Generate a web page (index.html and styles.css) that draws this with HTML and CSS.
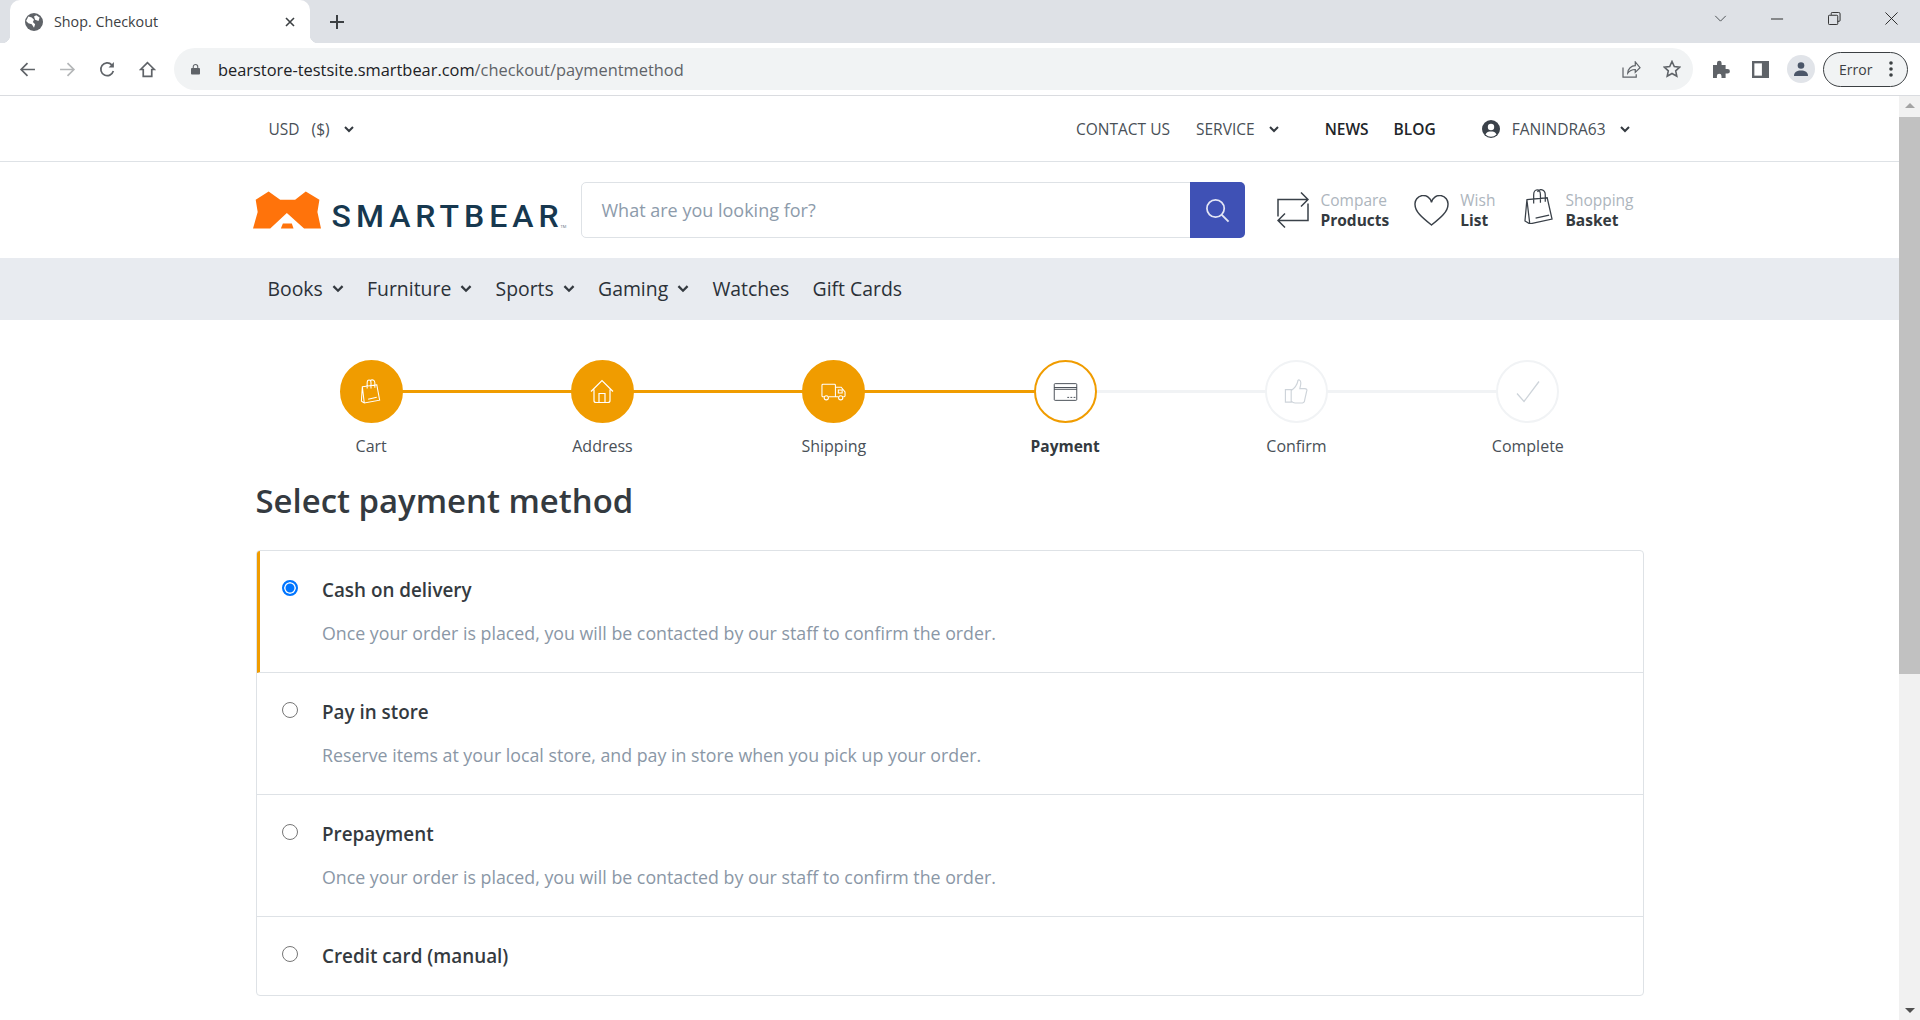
FILE: index.html
```html
<!DOCTYPE html>
<html lang="en">
<head>
  <meta charset="UTF-8" />
  <title>Shop. Checkout</title>
  <link rel="stylesheet" href="styles.css">
</head>
<body>

  <!-- Browser tab strip -->
  <div class="tabstrip">
    <div class="tab">
      <svg class="favicon" viewBox="0 0 16 16"><circle cx="8" cy="8" r="8" fill="#5f6368"/><path d="M3 3l3 1 2 2-1 2 2 2-1 3-2-3-3-1-2-2zM10 2l3 2-1 3-3-1-1-3z" fill="#fff"/></svg>
      <span class="tab-title">Shop. Checkout</span>
      <svg class="tab-close" viewBox="0 0 10 10"><path d="M1 1l8 8M9 1l-8 8" stroke="#3c4043" stroke-width="1.6"/></svg>
    </div>
    <svg class="tab-new" viewBox="0 0 14 14"><path d="M7 0v14M0 7h14" stroke="#3c4043" stroke-width="2"/></svg>
    <div class="window-btns">
      <svg viewBox="0 0 14 8" class="win-list"><path d="M1 1l6 6 6-6" fill="none" stroke="#3c4043"/></svg>
      <svg viewBox="0 0 14 2" class="win-min"><path d="M0 1h13" stroke="#222"/></svg>
      <svg viewBox="0 0 14 14" class="win-max"><path d="M3.5 3V1.500a1 1 0 0 1 1-1h7a1.500 1.500 0 0 1 1.500 1.500v7a1 1 0 0 1-1 1h-1.500M1.500 3.500h8a1 1 0 0 1 1 1v8a1 1 0 0 1-1 1h-8a1 1 0 0 1-1-1v-8a1 1 0 0 1 1-1z" fill="none" stroke="#222"/></svg>
      <svg viewBox="0 0 14 14" class="win-close"><path d="M.5.500l13 13M13.500.500l-13 13" stroke="#222"/></svg>
    </div>
  </div>

  <!-- Browser toolbar -->
  <div class="toolbar">
    <svg class="tool-icon back" viewBox="0 0 16 16"><path d="M15 8H2M8 2L2 8l6 6" fill="none" stroke="#5f6368" stroke-width="1.600"/></svg>
    <svg class="tool-icon fwd" viewBox="0 0 16 16"><path d="M1 8h13M8 2l6 6-6 6" fill="none" stroke="#b4b6b8" stroke-width="1.600"/></svg>
    <svg class="tool-icon reload" viewBox="0 0 16 16"><path d="M13.500 9.500A6 6 0 1 1 12 3.600" fill="none" stroke="#5f6368" stroke-width="1.600"/><path d="M14 1v5H9z" fill="#5f6368"/></svg>
    <svg class="tool-icon home" viewBox="0 0 16 16"><path d="M8 1.500L1.500 8H4v6.500h8V8h2.500z" fill="none" stroke="#5f6368" stroke-width="1.600"/></svg>
    <div class="omnibox">
      <svg class="lock" viewBox="0 0 10 12"><path d="M1 5h8a1 1 0 0 1 1 1v5a1 1 0 0 1-1 1H1a1 1 0 0 1-1-1V6a1 1 0 0 1 1-1z" fill="#5f6368"/><path d="M2.500 5V3.500a2.500 2.500 0 0 1 5 0V5" fill="none" stroke="#5f6368" stroke-width="1.200"/></svg>
      <span class="url"><span class="url-host">bearstore-testsite.smartbear.com</span>/checkout/paymentmethod</span>
      <svg class="omni-share" viewBox="0 0 20 18"><path d="M1 7v10h14v-3M6 13c0-5 4-8 8-8V1l5 6-5 5V9c-4 0-6 1-8 4z" fill="none" stroke="#5f6368" stroke-width="1.300"/></svg>
      <svg class="omni-star" viewBox="0 0 18 18"><path d="M9 1.500l2.300 5 5.400.6-4 3.700 1.100 5.400L9 13.500l-4.800 2.700 1.100-5.400-4-3.700 5.400-.6z" fill="none" stroke="#5f6368" stroke-width="1.600"/></svg>
    </div>
    <svg class="ext-icon" viewBox="0 0 18 18"><path d="M1 5h4V3a2.300 2.300 0 0 1 4.600 0v2h4v4h2a2.300 2.300 0 0 1 0 4.600h-2V18H9.500v-2a2.300 2.300 0 0 0-4.600 0v2H1z" fill="#5f6368"/></svg>
    <svg class="side-icon" viewBox="0 0 18 18"><path d="M0 0h18v18H0z" fill="#5f6368"/><path d="M2.500 2.500h8v13h-8z" fill="#fff"/></svg>
    <div class="avatar"><svg viewBox="0 0 16 16"><circle cx="8" cy="4.500" r="3.300" fill="#4a5568"/><path d="M1 15c0-4 3-5.500 7-5.500s7 1.500 7 5.500z" fill="#4a5568"/></svg></div>
    <div class="error-pill">
      <span>Error</span>
      <svg viewBox="0 0 4 16"><circle cx="2" cy="2" r="1.800" fill="#3c4043"/><circle cx="2" cy="8" r="1.800" fill="#3c4043"/><circle cx="2" cy="14" r="1.800" fill="#3c4043"/></svg>
    </div>
  </div>

  <div class="viewport">
    <div class="page">

      <!-- Top menu -->
      <div class="topbar">
        <div class="container topbar-inner">
          <span class="top-link currency">USD &nbsp;($)<svg class="chev" viewBox="0 0 10 7"><path d="M1 1l4 4 4-4" /></svg></span>
          <span class="top-link contact">CONTACT US</span>
          <span class="top-link service">SERVICE<svg class="chev" viewBox="0 0 10 7"><path d="M1 1l4 4 4-4" /></svg></span>
          <span class="top-link strong news">NEWS</span>
          <span class="top-link strong blog">BLOG</span>
          <svg class="user-icon" viewBox="0 0 18 18"><circle cx="9" cy="9" r="9" fill="#3a4149"/><circle cx="9" cy="7" r="3.200" fill="#fff"/><path d="M3.500 14.500c1-2.500 3-3 5.500-3s4.500.5 5.500 3a8 8 0 0 1-11 0z" fill="#fff"/></svg>
          <span class="top-link user">FANINDRA63<svg class="chev" viewBox="0 0 10 7"><path d="M1 1l4 4 4-4" /></svg></span>
        </div>
      </div>

      <!-- Logo, search and tools -->
      <div class="header">
        <div class="container header-inner">
          <div class="logo">
            <svg class="bear" viewBox="0 0 68.300 37.300"><path d="M2.700 8.300L15.700 0l11.600 8.300h15L53 0l13.700 8.300-2 12.400 3.600 16.600h-17L34 21.700 17.300 37.300H0l4.700-16.600z" fill="#ff730b"/><path d="M28 37.300l2-5h9l1.700 5z" fill="#ff730b"/></svg>
            <span class="logo-text">SMARTBEAR</span><span class="logo-tm">TM</span>
          </div>
          <div class="search">
            <span class="search-input">What are you looking for?</span>
            <div class="search-btn"><svg viewBox="0 0 26 26"><circle cx="11" cy="11" r="9" fill="none" stroke="#e4e6f5" stroke-width="1.800"/><path d="M17.500 17.500l7 7" stroke="#e4e6f5" stroke-width="2"/></svg></div>
          </div>
          <div class="tool compare">
            <svg viewBox="0 0 32 36"><path d="M1 25V8h30M24 1l7 7-7 7M31 12v17H1M8 22l-7 7 7 7" fill="none" stroke="#3a4149" stroke-width="1.500" transform="translate(0 -.5)"/></svg>
            <div class="tool-text"><span>Compare</span><b>Products</b></div>
          </div>
          <div class="tool wish">
            <svg viewBox="0 0 36 32"><path d="M18 31C8 23 1 17 1 10a8.600 8.600 0 0 1 17-2.500A8.600 8.600 0 0 1 35 10c0 7-7 13-17 21z" fill="none" stroke="#3a4149" stroke-width="1.500"/></svg>
            <div class="tool-text"><span>Wish</span><b>List</b></div>
          </div>
          <div class="tool basket">
            <svg viewBox="0 0 30 36"><path d="M3 11l21-2 5 22-23 5-5-3zM1 33l2-22M6 36l-3-25M10 15V6c0-7 7-7 7 0v8M14 3c2-4 8-3 8 3v7M12 30l14-3" fill="none" stroke="#3a4149" stroke-width="1.300"/></svg>
            <div class="tool-text"><span>Shopping</span><b>Basket</b></div>
          </div>
        </div>
      </div>

      <!-- Main navigation -->
      <div class="nav">
        <div class="container nav-inner">
          <span class="nav-item">Books<svg class="chev" viewBox="0 0 10 7"><path d="M1 1l4 4 4-4" /></svg></span>
          <span class="nav-item">Furniture<svg class="chev" viewBox="0 0 10 7"><path d="M1 1l4 4 4-4" /></svg></span>
          <span class="nav-item">Sports<svg class="chev" viewBox="0 0 10 7"><path d="M1 1l4 4 4-4" /></svg></span>
          <span class="nav-item">Gaming<svg class="chev" viewBox="0 0 10 7"><path d="M1 1l4 4 4-4" /></svg></span>
          <span class="nav-item">Watches</span>
          <span class="nav-item">Gift Cards</span>
        </div>
      </div>

      <div class="container">
        <!-- Checkout steps -->
        <div class="steps">
          <div class="step done">
            <div class="step-circle"><svg viewBox="0 0 24 26"><path d="M3 8l15-2 3 16-16 3-3-2zM2 23L3 8M5 25L3 8M8 10V4c0-4 4-4 4 0v6M11 2c2-2 5-1 5 2v5M9 21l9-2" fill="none" stroke="#fff" stroke-width="1.100"/></svg></div>
            <div class="step-label">Cart</div>
          </div>
          <div class="step done">
            <div class="step-circle"><svg viewBox="0 0 24 24"><path d="M1 12L12 1l11 11M4 10v11a2 2 0 0 0 2 2h12a2 2 0 0 0 2-2V10M9 23v-9h6v9" fill="none" stroke="#fff" stroke-width="1.200"/></svg></div>
            <div class="step-label">Address</div>
          </div>
          <div class="step done">
            <div class="step-circle"><svg class="wide" viewBox="0 0 26 18"><path d="M3 14H2a1 1 0 0 1-1-1V2a1 1 0 0 1 1-1h12a1 1 0 0 1 1 1v12H8M15 4h6l4 5v4a1 1 0 0 1-1 1h-1M18 14h-3M18 7h4v3h-4z" fill="none" stroke="#fff" stroke-width="1.100"/><circle cx="5.500" cy="15" r="2.200" fill="none" stroke="#fff" stroke-width="1.100"/><circle cx="20.500" cy="15" r="2.200" fill="none" stroke="#fff" stroke-width="1.100"/></svg></div>
            <div class="step-label">Shipping</div>
          </div>
          <div class="step active">
            <div class="step-circle"><svg class="wide" viewBox="0 0 26 20"><path d="M1.500.700h23a1 1 0 0 1 1 1v16.600a1 1 0 0 1-1 1h-23a1 1 0 0 1-1-1V1.700a1 1 0 0 1 1-1zM.500 5h25M.500 7h25M15 16h2M18.500 16h2M22 16h2" fill="none" stroke="#3a4149" stroke-width="1"/></svg></div>
            <div class="step-label">Payment</div>
          </div>
          <div class="step todo">
            <div class="step-circle"><svg viewBox="0 0 24 26"><path d="M1 11h6v13H1zM7 12c3-2 6-5 7-10 0-2 3-1 3 2 0 3-1 5-1 6h5c2 0 3 1 2 3l-2 9c0 2-2 3-4 3H11c-2 0-3-1-4-2" fill="none" stroke="#ced4da" stroke-width="1.200"/></svg></div>
            <div class="step-label">Confirm</div>
          </div>
          <div class="step todo last">
            <div class="step-circle"><svg viewBox="0 0 24 24"><path d="M1 14l7 8L23 2" fill="none" stroke="#ced4da" stroke-width="1.300"/></svg></div>
            <div class="step-label">Complete</div>
          </div>
        </div>

        <h1 class="page-title">Select payment method</h1>

        <!-- Payment options -->
        <div class="methods">
          <div class="method selected">
            <span class="radio checked"></span>
            <div>
              <div class="method-name">Cash on delivery</div>
              <div class="method-desc">Once your order is placed, you will be contacted by our staff to confirm the order.</div>
            </div>
          </div>
          <div class="method">
            <span class="radio"></span>
            <div>
              <div class="method-name">Pay in store</div>
              <div class="method-desc">Reserve items at your local store, and pay in store when you pick up your order.</div>
            </div>
          </div>
          <div class="method">
            <span class="radio"></span>
            <div>
              <div class="method-name">Prepayment</div>
              <div class="method-desc">Once your order is placed, you will be contacted by our staff to confirm the order.</div>
            </div>
          </div>
          <div class="method short">
            <span class="radio"></span>
            <div>
              <div class="method-name">Credit card (manual)</div>
            </div>
          </div>
        </div>
      </div>
    </div>

    <!-- Scrollbar -->
    <div class="scrollbar">
      <svg class="sb-arrow" viewBox="0 0 10 5"><path d="M0 5l5-5 5 5z" fill="#a3a3a3"/></svg>
      <div class="sb-thumb"></div>
      <svg class="sb-arrow bottom" viewBox="0 0 10 5"><path d="M0 0l5 5 5-5z" fill="#505050"/></svg>
    </div>
  </div>

</body>
</html>
```

FILE: styles.css
```css
html, body {
  margin: 0;
  height: 1020px;
  overflow: hidden;
}

body {
  font-family: "Open Sans", "Noto Sans", sans-serif;
  color: #343a40;
  background: #fff;
  display: flex;
  flex-direction: column;
}

svg {
  display: block;
  flex: none;
}

/* browser chrome */
.tabstrip {
  height: 43px;
  background: #dee1e6;
  display: flex;
  align-items: flex-end;
  flex: none;
}

.tab {
  position: relative;
  width: 300px;
  height: 43px;
  margin-left: 10px;
  background: #fff;
  border-radius: 10px 10px 0 0;
  display: flex;
  align-items: center;
  padding: 0 15px;
  box-sizing: border-box;
}

/* the little flared corners at the foot of the tab */
.tab::before,
.tab::after {
  content: "";
  position: absolute;
  bottom: 0;
  width: 8px;
  height: 8px;
}

.tab::before {
  left: -8px;
  background: radial-gradient(circle at 0 0, #dee1e6 8px, #fff 8.5px);
}

.tab::after {
  right: -8px;
  background: radial-gradient(circle at 100% 0, #dee1e6 8px, #fff 8.5px);
}

.favicon {
  width: 18px;
  height: 18px;
}

.tab-title {
  font-size: 14.3px;
  color: #3c4043;
  margin-left: 11px;
  flex: 1;
}

.tab-close {
  width: 10px;
  height: 10px;
}

.tab-new {
  width: 14px;
  height: 14px;
  margin: 0 0 14px 20px;
}

.window-btns {
  margin-left: auto;
  align-self: flex-start;
  display: flex;
  align-items: center;
  height: 37px;
  padding-right: 22px;
}

.win-list { width: 13px; height: 7px; margin-right: 44px; }
.win-min { width: 13px; height: 2px; margin-right: 44px; }
.win-max { width: 13px; height: 13px; margin-right: 44px; }
.win-close { width: 13px; height: 13px; }

.toolbar {
  height: 52px;
  background: #fff;
  border-bottom: 1px solid #dadce0;
  display: flex;
  align-items: center;
  flex: none;
}

.tool-icon {
  width: 17px;
  height: 17px;
  margin-right: 23px;
}

.tool-icon.back { margin-left: 19px; }
.tool-icon.home { margin-right: 18px; }

.omnibox {
  width: 1519px;
  height: 42px;
  background: #f1f3f4;
  border-radius: 21px;
  display: flex;
  align-items: center;
  padding: 0 12px 0 17px;
  box-sizing: border-box;
}

.lock {
  width: 9px;
  height: 12px;
}

.url {
  font-size: 16.4px;
  color: #5f6368;
  margin-left: 18px;
  flex: 1;
}

.url-host {
  color: #202124;
}

.omni-share {
  width: 19px;
  height: 17px;
  margin-right: 22px;
}

.omni-star {
  width: 18px;
  height: 18px;
}

.ext-icon {
  width: 18px;
  height: 18px;
  margin-left: 19px;
}

.side-icon {
  width: 17px;
  height: 17px;
  margin-left: 22px;
}

.avatar {
  width: 28px;
  height: 28px;
  margin-left: 18px;
  background: #e1e4e9;
  border-radius: 50%;
  display: flex;
  align-items: center;
  justify-content: center;
}

.avatar svg {
  width: 16px;
  height: 16px;
}

.error-pill {
  width: 85px;
  height: 35px;
  margin-left: 8px;
  border: 1.5px solid #3c4043;
  border-radius: 18px;
  background: #f1f3f4;
  box-sizing: border-box;
  display: flex;
  align-items: center;
  padding: 0 14px 0 15px;
  justify-content: space-between;
  font-size: 14px;
  color: #3c4043;
}

.error-pill svg {
  width: 4px;
  height: 16px;
}

/* page */
.viewport {
  flex: 1;
  display: flex;
  min-height: 0;
}

.page {
  flex: 1;
  min-width: 0;
}

.container {
  width: 1388px;
  margin: 0 auto;
}

.chev {
  width: 10px;
  height: 7px;
  display: inline-block;
  fill: none;
  stroke: #343a40;
  stroke-width: 2;
}

.topbar {
  height: 65px;
  border-bottom: 1px solid #dee2e6;
}

.topbar-inner {
  height: 65px;
  padding-top: 1px;
  box-sizing: border-box;
  display: flex;
  align-items: center;
}

.top-link {
  font-size: 15.5px;
  color: #495057;
  display: flex;
  align-items: center;
}

.top-link .chev {
  margin-left: 14px;
}

.top-link.strong {
  color: #212529;
  font-size: 15.5px;
  font-weight: 600;
}

.currency { margin-left: 13px; word-spacing: 2px; }
.contact { margin-left: auto; }
.service { margin-left: 26px; }
.news { margin-left: 46px; }
.blog { margin-left: 25px; }

.user-icon {
  width: 18px;
  height: 18px;
  margin: -1px 0 0 46px;
}

.user {
  margin: 0 14px 0 12px;
}

.header {
  height: 96px;
}

.header-inner {
  height: 96px;
  display: flex;
  align-items: center;
}

.logo {
  width: 328px;
  margin-left: -3px;
  display: flex;
  align-items: flex-end;
  flex: none;
}

.bear {
  width: 68px;
  height: 38px;
}

.logo-text {
  font-family: "Roboto", sans-serif;
  font-weight: 500;
  font-size: 32px;
  line-height: 26px;
  letter-spacing: 5px;
  color: #17384f;
  margin-left: 11px;
}

.logo-tm {
  font-size: 4px;
  color: #5b7283;
  margin-left: -3px;
}

.search {
  width: 664px;
  height: 56px;
  border: 1px solid #dee2e6;
  border-radius: 5px;
  box-sizing: border-box;
  display: flex;
  align-items: stretch;
  flex: none;
}

.search-input {
  flex: 1;
  padding-left: 20px;
  font-size: 18px;
  color: #8d9bab;
  display: flex;
  align-items: center;
}

.search-btn {
  width: 55px;
  margin: -1px;
  background: #3f51b5;
  border-radius: 0 5px 5px 0;
  display: flex;
  align-items: center;
  justify-content: center;
}

.search-btn svg {
  width: 25px;
  height: 25px;
}

.tool {
  display: flex;
  align-items: center;
}

.tool-text {
  display: flex;
  flex-direction: column;
  font-size: 15.5px;
  line-height: 20px;
  color: #adb5bd;
}

.tool-text b {
  color: #343a40;
  font-weight: 700;
}

.compare { margin-left: 32px; }
.compare svg { width: 32px; height: 36px; margin-right: 12px; }
.wish { margin-left: 25px; }
.wish svg { width: 35px; height: 31px; margin-right: 11px; }
.basket { margin-left: 29px; }
.basket svg { width: 29px; height: 35px; margin: 0 12px 7px 0; }

.nav {
  height: 62px;
  background: #e8ebf0;
}

.nav-inner {
  height: 62px;
  display: flex;
  align-items: center;
  padding-left: 12px;
  box-sizing: border-box;
}

.nav-item {
  font-size: 19.4px;
  line-height: 60px;
  color: #2b3138;
  display: flex;
  align-items: center;
  margin-right: 23.25px;
}

.nav-item .chev {
  margin-left: 9px;
  width: 12px;
  height: 8px;
}

/* steps */
.steps {
  display: grid;
  grid-template-columns: repeat(6, 1fr);
  margin-top: 40px;
}

.step {
  position: relative;
  display: flex;
  flex-direction: column;
  align-items: center;
}

.step::after {
  content: "";
  position: absolute;
  left: 50%;
  top: 30px;
  width: 100%;
  height: 3px;
  background: #f1f3f5;
}

.step.done::after {
  background: #f09c00;
}

.step.last::after {
  display: none;
}

.step-circle {
  position: relative;
  z-index: 1;
  width: 63px;
  height: 63px;
  border-radius: 50%;
  box-sizing: border-box;
  background: #fff;
  border: 2px solid #f1f3f5;
  display: flex;
  align-items: center;
  justify-content: center;
}

.step-circle svg {
  width: 24px;
  height: 25px;
}

.step-circle svg.wide {
  width: 25px;
  height: 18px;
}

.step.done .step-circle {
  background: #f09c00;
  border-color: #f09c00;
}

.step.active .step-circle {
  border-color: #f09c00;
}

.step-label {
  margin-top: 11px;
  font-size: 16px;
  line-height: 24px;
  color: #495057;
}

.step.active .step-label {
  color: #343a40;
  font-size: 15.5px;
  font-weight: 700;
}

.page-title {
  font-size: 32.9px;
  font-weight: 600;
  line-height: 42px;
  color: #343a40;
  margin: 22px 0 28px;
}

/* payment methods */
.methods {
  border: 1px solid #dee2e6;
  border-radius: 4px;
  overflow: hidden;
}

.method {
  height: 122px;
  border-bottom: 1px solid #dee2e6;
  display: flex;
  padding-left: 25px;
  box-sizing: border-box;
}

.method.selected {
  border-left: 3px solid #f09c00;
  padding-left: 22px;
}

.method.short {
  height: 78px;
  border-bottom: 0;
}

.radio {
  width: 16px;
  height: 16px;
  margin-top: 29px;
  border: 1px solid #767676;
  border-radius: 50%;
  box-sizing: border-box;
  background: #fff;
  flex: none;
}

.radio.checked {
  border: 2px solid #0075ff;
  box-shadow: inset 0 0 0 1.500px #fff;
  background: #0075ff;
}

.method > div {
  margin-left: 24.5px;
  padding-top: 24px;
}

.method-name {
  font-size: 18.85px;
  font-weight: 600;
  line-height: 30px;
  color: #343a40;
}

.method-desc {
  margin-top: 13px;
  font-size: 17.8px;
  line-height: 30px;
  color: #8a97a6;
}

/* scrollbar */
.scrollbar {
  width: 21px;
  background: #f1f1f1;
  display: flex;
  flex-direction: column;
  align-items: center;
  flex: none;
}

.sb-arrow {
  width: 10px;
  height: 5px;
  margin: 7px 0 9px;
}

.sb-arrow.bottom {
  margin: auto 0 7px;
}

.sb-thumb {
  width: 100%;
  height: 557px;
  background: #c1c1c1;
}
```
